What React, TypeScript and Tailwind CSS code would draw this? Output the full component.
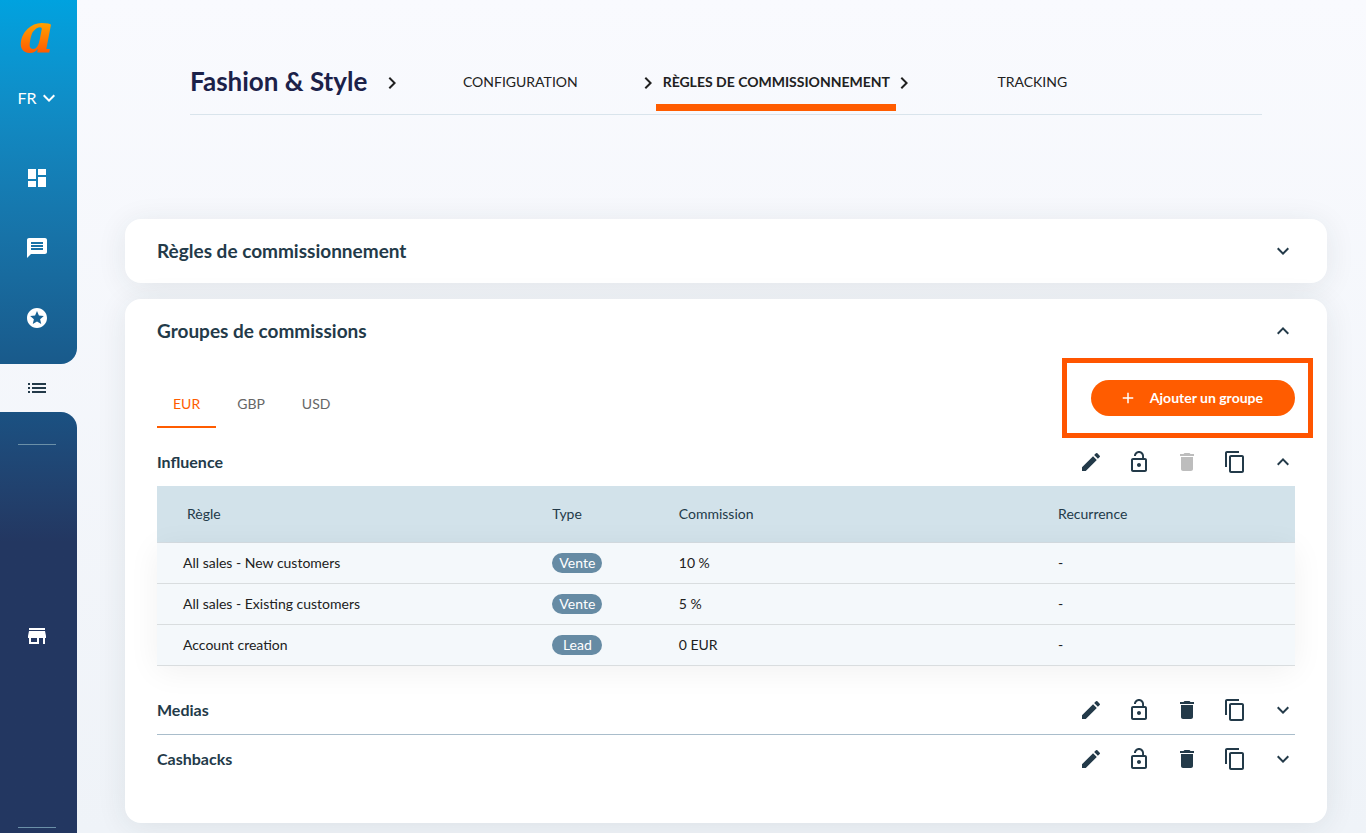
import { useState } from 'react'
import type { ReactNode } from 'react'
import {
  MdAdd,
  MdChevronRight,
  MdContentCopy,
  MdDashboard,
  MdDelete,
  MdEdit,
  MdExpandLess,
  MdExpandMore,
  MdList,
  MdLockOpen,
  MdMessage,
  MdStars,
  MdStore,
} from 'react-icons/md'

type Rule = { name: string; type: string; commission: string; recurrence: string }
type Group = { name: string; locked?: boolean; rules: Rule[] }

const GROUPS: Group[] = [
  {
    name: 'Influence',
    locked: true,
    rules: [
      { name: 'All sales - New customers', type: 'Vente', commission: '10 %', recurrence: '-' },
      { name: 'All sales - Existing customers', type: 'Vente', commission: '5 %', recurrence: '-' },
      { name: 'Account creation', type: 'Lead', commission: '0 EUR', recurrence: '-' },
    ],
  },
  { name: 'Medias', rules: [] },
  { name: 'Cashbacks', rules: [] },
]

const STEPS = ['Configuration', 'Règles de commissionnement', 'Tracking']
const CURRENCIES = ['EUR', 'GBP', 'USD']

function Logo() {
  return (
    <svg viewBox="0 0 56 68" className="h-[68px] w-14 shrink-0" role="img" aria-label="Logo">
      <defs>
        <linearGradient id="logo" gradientUnits="userSpaceOnUse" x1="0" y1="20" x2="0" y2="52">
          <stop offset="0" stopColor="#ffa800" />
          <stop offset="1" stopColor="#ff5c00" />
        </linearGradient>
      </defs>
      <text x="28" y="52" textAnchor="middle" fontFamily="DejaVu Serif, serif" fontSize="55" fontWeight="bold" fontStyle="italic" fill="url(#logo)">a</text>
    </svg>
  )
}

function NavLink({ label, children }: { label: string; children: ReactNode }) {
  return (
    <a href="#" aria-label={label} className="flex h-6 w-6 items-center justify-center text-2xl">
      {children}
    </a>
  )
}

function Sidebar() {
  return (
    <nav className="flex w-[77px] shrink-0 flex-col text-white">
      <div className="flex h-[364px] flex-col items-center rounded-br-2xl bg-linear-to-b from-[#00a2df] to-[#195a8b] pr-[3px]">
        <Logo />
        <button className="mt-[18px] flex h-6 items-center text-base">
          FR
          <MdExpandMore className="-mr-1 text-2xl" />
        </button>
        <div className="mt-14 flex flex-col gap-[46px]">
          <NavLink label="Dashboard"><MdDashboard /></NavLink>
          <NavLink label="Messages"><MdMessage /></NavLink>
          <NavLink label="Favoris"><MdStars /></NavLink>
        </div>
      </div>
      <div className="flex h-12 items-center justify-center pr-[3px] text-[#233a49]">
        <NavLink label="Programmes"><MdList /></NavLink>
      </div>
      <div className="flex flex-1 flex-col items-center rounded-tr-2xl bg-linear-to-b from-[#1a5182] to-[#233761] to-[130px] pr-[3px] pt-8">
        <hr className="w-[38px] border-[#6b90a8]" />
        <div className="mt-[179px] flex-1">
          <NavLink label="Boutique"><MdStore /></NavLink>
        </div>
        <hr className="mb-[5px] w-[38px] border-[#6b90a8]" />
      </div>
    </nav>
  )
}

function Steps() {
  return (
    <header className="ml-[113px] mr-[104px] flex h-[115px] items-end border-b border-[#d9e4ec]">
      <h1 className="pb-[15px] text-[26px]/9 font-bold whitespace-nowrap text-[#1b2149]">Fashion &amp; Style</h1>
      <div className="ml-[17px] flex flex-1">
        {STEPS.map((step, i) => (
          <div key={step} className="flex max-w-64 flex-1">
            <MdChevronRight className="-mx-1 mt-3 shrink-0 text-2xl text-[#212121]" />
            <a
              href="#"
              aria-current={i === 1 ? 'step' : undefined}
              className={`mb-[3px] flex h-13 flex-1 items-center justify-center border-b-[7px] text-sm whitespace-nowrap uppercase text-[#212121] ${
                i === 1 ? 'border-[#ff5c00] font-bold' : 'border-transparent'
              }`}
            >
              {step}
            </a>
          </div>
        ))}
      </div>
    </header>
  )
}

function Panel({ title, open, onToggle, children }: { title: string; open: boolean; onToggle: () => void; children?: ReactNode }) {
  return (
    <section className="rounded-2xl bg-white px-8 shadow-[0_4px_30px_rgba(35,50,60,0.09)]">
      <h2 className="text-[19px] font-bold">
        <button onClick={onToggle} aria-expanded={open} className="flex h-16 w-full items-center justify-between">
          {title}
          {open ? <MdExpandLess className="text-2xl" /> : <MdExpandMore className="text-2xl" />}
        </button>
      </h2>
      {open && children}
    </section>
  )
}

function RulesTable({ rules }: { rules: Rule[] }) {
  return (
    <table className="mb-5 w-full table-fixed border-separate border-spacing-0 text-left text-sm">
      <thead className="bg-[#d2e2ea]">
        <tr className="h-[57px] text-[#233a49] *:border-b *:border-[#d6dde2] *:px-4 *:font-normal">
          <th scope="col" className="w-3/9"><span className="pl-3.5">Règle</span></th>
          <th scope="col" className="w-1/9">Type</th>
          <th scope="col" className="w-3/9">Commission</th>
          <th scope="col" className="w-2/9">Recurrence</th>
        </tr>
      </thead>
      <tbody className="bg-[#f4f8fb] text-[#212121] shadow-[0_5px_30px_rgba(0,0,0,0.06)]">
        {rules.map(rule => (
          <tr key={rule.name} className="h-[41px] *:border-b *:border-[#d9dddf] *:px-4">
            <td><span className="pl-2.5">{rule.name}</span></td>
            <td>
              <span className="flex h-5 w-[50px] items-center justify-center rounded-full bg-[#668ba4] text-white">{rule.type}</span>
            </td>
            <td>{rule.commission}</td>
            <td>{rule.recurrence}</td>
          </tr>
        ))}
      </tbody>
    </table>
  )
}

function GroupRow({ group, open, onToggle }: { group: Group; open: boolean; onToggle: () => void }) {
  return (
    <>
      <div className="flex h-12 items-center justify-between">
        <h3 className="text-base font-bold">{group.name}</h3>
        <div className="flex gap-6 text-2xl">
          <button aria-label={`Modifier ${group.name}`}><MdEdit /></button>
          <button aria-label={`Verrouiller ${group.name}`}><MdLockOpen /></button>
          <button aria-label={`Supprimer ${group.name}`} disabled={group.locked} className="disabled:text-[#bdbdbd]"><MdDelete /></button>
          <button aria-label={`Copier ${group.name}`}><MdContentCopy /></button>
          <button aria-label={`Déplier ${group.name}`} aria-expanded={open} onClick={onToggle}>
            {open ? <MdExpandLess /> : <MdExpandMore />}
          </button>
        </div>
      </div>
      {open && group.rules.length > 0 && <RulesTable rules={group.rules} />}
    </>
  )
}

export default function App() {
  const [currency, setCurrency] = useState('EUR')
  const [rulesOpen, setRulesOpen] = useState(false)
  const [groupsOpen, setGroupsOpen] = useState(true)
  const [openGroup, setOpenGroup] = useState('Influence')

  return (
    <div className="flex min-h-screen bg-linear-to-b from-[#f9fafe] to-[#eff3f8] font-['Lato',sans-serif] text-[#233a49]">
      <Sidebar />
      <div className="min-w-0 flex-1">
        <Steps />
        <main className="mt-[104px] mb-2.5 ml-12 mr-[39px] flex flex-col gap-4">
          <Panel title="Règles de commissionnement" open={rulesOpen} onToggle={() => setRulesOpen(!rulesOpen)} />
          <Panel title="Groupes de commissions" open={groupsOpen} onToggle={() => setGroupsOpen(!groupsOpen)}>
            <div className="mt-[17px] mb-2.5 flex items-start justify-between">
              <div role="tablist" className="flex gap-[5px]">
                {CURRENCIES.map(c => (
                  <button
                    key={c}
                    role="tab"
                    aria-selected={c === currency}
                    onClick={() => setCurrency(c)}
                    className={`h-12 border-b-2 px-4 pt-0.5 text-sm ${
                      c === currency ? 'border-[#ff5c00] text-[#ff5c00]' : 'border-transparent text-[#666666]'
                    }`}
                  >
                    {c}
                  </button>
                ))}
              </div>
              <div className="relative">
                <button className="flex h-9 items-center gap-[13px] rounded-full bg-[#ff5c00] px-8 text-sm font-bold text-white">
                  <MdAdd className="-ml-1 text-lg" />
                  Ajouter un groupe
                </button>
                <div className="pointer-events-none absolute -inset-y-[22px] -left-[29px] -right-[18px] border-5 border-[#ff5500]" />
              </div>
            </div>
            <div className="pb-10">
              {GROUPS.map((group, i) => (
                <div key={group.name} className={i > 1 ? 'border-t border-[#a9bdcb]' : ''}>
                  <GroupRow
                    group={group}
                    open={openGroup === group.name}
                    onToggle={() => setOpenGroup(openGroup === group.name ? '' : group.name)}
                  />
                </div>
              ))}
            </div>
          </Panel>
        </main>
      </div>
    </div>
  )
}
